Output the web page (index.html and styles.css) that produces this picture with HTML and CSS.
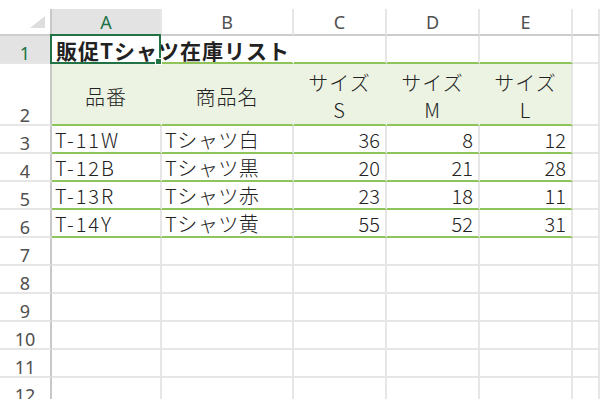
FILE: index.html
```html
<!DOCTYPE html>
<html>
<head>
	<title>販促Tシャツ在庫リスト</title>
	<meta charset="utf-8">
	<link rel="stylesheet" href="styles.css">
</head>
<body>
	<div class="sheet">
		<div class="corner"><span class="tri"></span></div>
		<div class="ch on">A</div>
		<div class="ch">B</div>
		<div class="ch">C</div>
		<div class="ch">D</div>
		<div class="ch">E</div>
		<div class="ch"></div>

		<div class="rh on">1</div>
		<div class="c title sel grn open">販促Tシャツ在庫リスト</div>
		<div class="c grn open"></div>
		<div class="c grn"></div>
		<div class="c grn"></div>
		<div class="c grn"></div>
		<div class="c"></div>

		<div class="rh">2</div>
		<div class="c lbl grn fill">品番</div>
		<div class="c lbl grn fill">商品名</div>
		<div class="c lbl grn fill">サイズ<br>S</div>
		<div class="c lbl grn fill">サイズ<br>M</div>
		<div class="c lbl grn fill last">サイズ<br>L</div>
		<div class="c"></div>

		<div class="rh">3</div>
		<div class="c code grn">T-11W</div>
		<div class="c name grn">Tシャツ白</div>
		<div class="c num grn">36</div>
		<div class="c num grn">8</div>
		<div class="c num grn">12</div>
		<div class="c"></div>

		<div class="rh">4</div>
		<div class="c code grn">T-12B</div>
		<div class="c name grn">Tシャツ黒</div>
		<div class="c num grn">20</div>
		<div class="c num grn">21</div>
		<div class="c num grn">28</div>
		<div class="c"></div>

		<div class="rh">5</div>
		<div class="c code grn">T-13R</div>
		<div class="c name grn">Tシャツ赤</div>
		<div class="c num grn">23</div>
		<div class="c num grn">18</div>
		<div class="c num grn">11</div>
		<div class="c"></div>

		<div class="rh">6</div>
		<div class="c code grn">T-14Y</div>
		<div class="c name grn">Tシャツ黄</div>
		<div class="c num grn">55</div>
		<div class="c num grn">52</div>
		<div class="c num grn">31</div>
		<div class="c"></div>

		<div class="rh">7</div>
		<div class="c"></div><div class="c"></div><div class="c"></div><div class="c"></div><div class="c"></div><div class="c"></div>
		<div class="rh">8</div>
		<div class="c"></div><div class="c"></div><div class="c"></div><div class="c"></div><div class="c"></div><div class="c"></div>
		<div class="rh">9</div>
		<div class="c"></div><div class="c"></div><div class="c"></div><div class="c"></div><div class="c"></div><div class="c"></div>
		<div class="rh">10</div>
		<div class="c"></div><div class="c"></div><div class="c"></div><div class="c"></div><div class="c"></div><div class="c"></div>
		<div class="rh">11</div>
		<div class="c"></div><div class="c"></div><div class="c"></div><div class="c"></div><div class="c"></div><div class="c"></div>
		<div class="rh">12</div>
		<div class="c"></div><div class="c"></div><div class="c"></div><div class="c"></div><div class="c"></div><div class="c"></div>
	</div>
</body>
</html>
```

FILE: styles.css
```css
html, body {
	margin: 0;
	padding: 0;
	background-color: #fff;
	overflow: hidden;
}
body {
	padding-top: 9px;
}
.sheet {
	display: grid;
	grid-template-columns: 52px 110px 132px 93px 93px 93px 1fr;
	grid-template-rows: 27px 28px 62px;
	grid-auto-rows: 28px;
}
.sheet > div {
	box-sizing: border-box;
	min-width: 0;
	display: flex;
}
.corner {
	border-right: 2px solid #c8c8c8;
	border-bottom: 2px solid #cdcdcd;
	justify-content: flex-end;
	align-items: flex-end;
	padding: 0 5px 6px 0;
}
.tri {
	width: 0;
	height: 0;
	border-left: 15px solid transparent;
	border-bottom: 12px solid #dedede;
}
.ch {
	border-right: 2px solid #e6e6e6;
	border-bottom: 2px solid #cdcdcd;
	align-items: center;
	justify-content: center;
	font-family: "Noto Sans", sans-serif;
	font-size: 18px;
	color: #505050;
}
.rh {
	border-right: 2px solid #c8c8c8;
	border-bottom: 2px solid #e6e6e6;
	justify-content: center;
	align-items: flex-end;
	font-family: "Noto Sans", sans-serif;
	font-size: 18px;
	line-height: 18px;
	color: #505050;
}
.ch.on, .rh.on {
	background-color: #e3e3e3;
	color: #217346;
}
.c {
	border-right: 2px solid #e6e6e6;
	border-bottom: 2px solid #e6e6e6;
	align-items: flex-end;
	padding: 0 3px;
	font-family: "Noto Sans CJK JP", sans-serif;
	font-size: 20px;
	font-weight: 300;
	line-height: 24px;
	color: #222;
	white-space: nowrap;
}
.c.open {
	border-right-color: transparent;
}
.c.grn {
	border-bottom-color: #8fc45b;
}
.title {
	font-size: 21px;
	font-weight: bold;
	letter-spacing: 1px;
	padding-left: 4px;
	overflow: visible;
}
.sel {
	position: relative;
}
.sel::after {
	content: "";
	position: absolute;
	left: -2px;
	right: -1px;
	top: -2px;
	bottom: -2px;
	border: 2px solid #217346;
}
.sel::before {
	content: "";
	position: absolute;
	right: -2px;
	bottom: -3px;
	width: 5px;
	height: 5px;
	background-color: #217346;
	border: 1px solid #fff;
	z-index: 1;
}
.fill {
	background-color: #ecf3e3;
	border-right-color: transparent;
}
.fill.last {
	border-right-color: #e6e6e6;
}
.lbl {
	align-items: center;
	justify-content: center;
	text-align: center;
	padding-top: 4px;
	line-height: 27px;
	letter-spacing: 1px;
}
.code {
	letter-spacing: 2px;
}
.name {
	letter-spacing: 0.5px;
}
.num {
	justify-content: flex-end;
	padding-right: 5px;
}
```
